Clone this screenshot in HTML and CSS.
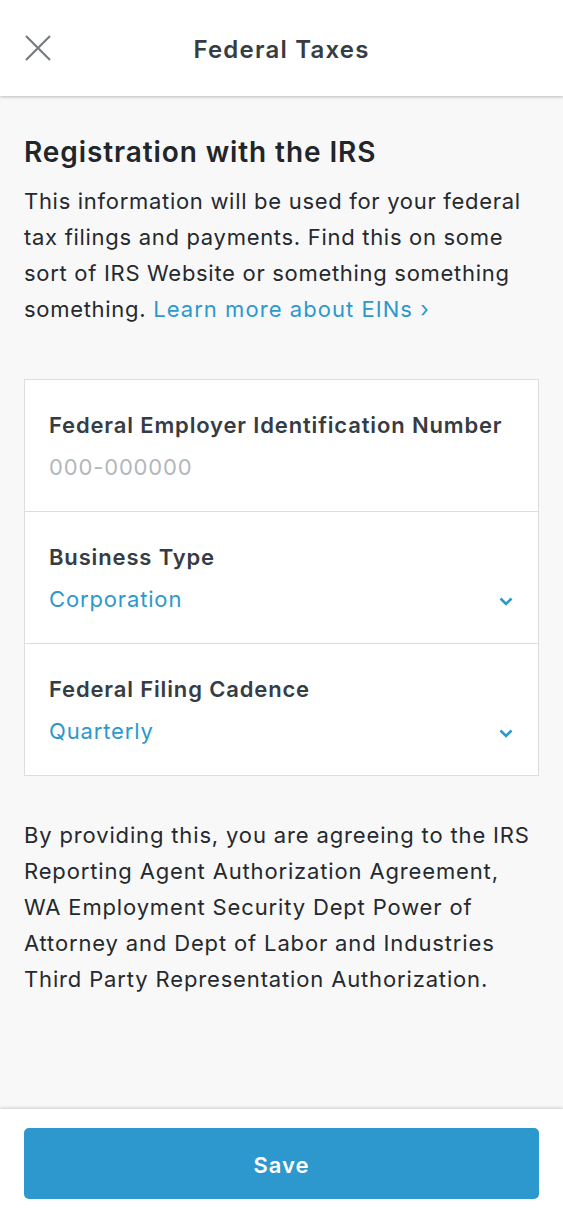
FILE: index.html
```html
<!DOCTYPE html>
<html lang="en">
<head>
<meta charset="utf-8">
<title>Federal Taxes</title>
<link rel="stylesheet" href="styles.css">
</head>
<body>
<div class="app">
  <header class="topbar">
    <button class="close" aria-label="Close">
      <svg width="28" height="28" viewBox="0 0 28 28"><path d="M2 2 L26 26 M26 2 L2 26" stroke="#767b80" stroke-width="2.2" fill="none"/></svg>
    </button>
    <h1 class="title">Federal Taxes</h1>
  </header>
  <main class="content">
    <h2 class="heading">Registration with the IRS</h2>
    <p class="intro">This information will be used for your federal tax filings and payments. Find this on some sort of IRS Website or something something something. <a class="link" href="#">Learn more about EINs ›</a></p>
    <div class="card">
      <div class="field">
        <div class="field-text">
          <div class="label">Federal Employer Identification Number</div>
          <div class="placeholder">000-000000</div>
        </div>
      </div>
      <div class="field">
        <div class="field-text">
          <div class="label">Business Type</div>
          <div class="value">Corporation</div>
        </div>
        <svg class="chev" width="14" height="9" viewBox="0 0 14 9"><path d="M1.5 1.5 L7 7 L12.5 1.5" stroke="#2c98cd" stroke-width="2.6" fill="none"/></svg>
      </div>
      <div class="field">
        <div class="field-text">
          <div class="label">Federal Filing Cadence</div>
          <div class="value">Quarterly</div>
        </div>
        <svg class="chev" width="14" height="9" viewBox="0 0 14 9"><path d="M1.5 1.5 L7 7 L12.5 1.5" stroke="#2c98cd" stroke-width="2.6" fill="none"/></svg>
      </div>
    </div>
    <p class="legal">By providing this, you are agreeing to the IRS Reporting Agent Authorization Agreement, WA Employment Security Dept Power of Attorney and Dept of Labor and Industries Third Party Representation Authorization.</p>
  </main>
  <footer class="bottombar">
    <button class="save">Save</button>
  </footer>
</div>
</body>
</html>
```
FILE: styles.css
```css
* { box-sizing: border-box; }
html, body { margin: 0; padding: 0; }
body {
  font-family: "Inter", "Liberation Sans", sans-serif;
  background: #f8f8f8;
  color: #25292e;
  letter-spacing: 0.85px;
}
.app {
  height: 1219px;
  display: flex;
  flex-direction: column;
}
.topbar {
  height: 96px;
  background: #fff;
  display: flex;
  align-items: center;
  justify-content: center;
  position: relative;
  box-shadow: 0 1px 3px rgba(0,0,0,0.25);
  z-index: 1;
  flex: none;
  padding-top: 3px;
}
.close {
  position: absolute;
  left: 24px;
  top: 34px;
  border: 0;
  background: none;
  padding: 0;
  width: 28px;
  height: 28px;
  display: block;
}
.close svg { display: block; }
.title {
  margin: 0;
  font-size: 24px;
  font-weight: 600;
  letter-spacing: 1.2px;
  color: #363c44;
}
.content {
  flex: 1;
  padding: 0 24px;
}
.heading {
  margin: 38px 0 0;
  font-size: 28px;
  line-height: 36px;
  font-weight: 600;
  letter-spacing: 0.9px;
  color: #222529;
}
.intro {
  margin: 13px 0 0;
  font-size: 22px;
  line-height: 36px;
  letter-spacing: 0.7px;
  color: #25292e;
}
.link {
  color: #2c98cd;
  text-decoration: none;
  letter-spacing: 1.05px;
}
.card {
  margin-top: 52px;
  background: #fff;
  border: 1px solid #dcdfe2;
}
.field {
  height: 132px;
  padding: 0 24px;
  display: flex;
  align-items: center;
  border-top: 1px solid #dcdfe2;
}
.field:first-child { border-top: 0; height: 131px; }
.field-text { flex: 1; }
.label {
  font-size: 22px;
  line-height: 30px;
  font-weight: 600;
  color: #363c44;
}
.placeholder, .value {
  margin-top: 12px;
  font-size: 22px;
  line-height: 30px;
}
.placeholder { color: #b3b7bb; }
.value { color: #2c98cd; }
.chev { margin-top: 48px; margin-right: 1px; }
.legal {
  margin: 41px 0 0;
  font-size: 22px;
  line-height: 36px;
  letter-spacing: 0.85px;
  color: #25292e;
}
.bottombar {
  flex: none;
  height: 110px;
  background: #fff;
  padding: 19px 24px 0;
  box-shadow: 0 -1px 3px rgba(0,0,0,0.18);
}
.save {
  width: 100%;
  height: 71px;
  border: 0;
  border-radius: 5px;
  background: #2c98cd;
  color: #fff;
  font-family: inherit;
  font-size: 22px;
  font-weight: 600;
  letter-spacing: 1px;
  padding-top: 3px;
}
```
